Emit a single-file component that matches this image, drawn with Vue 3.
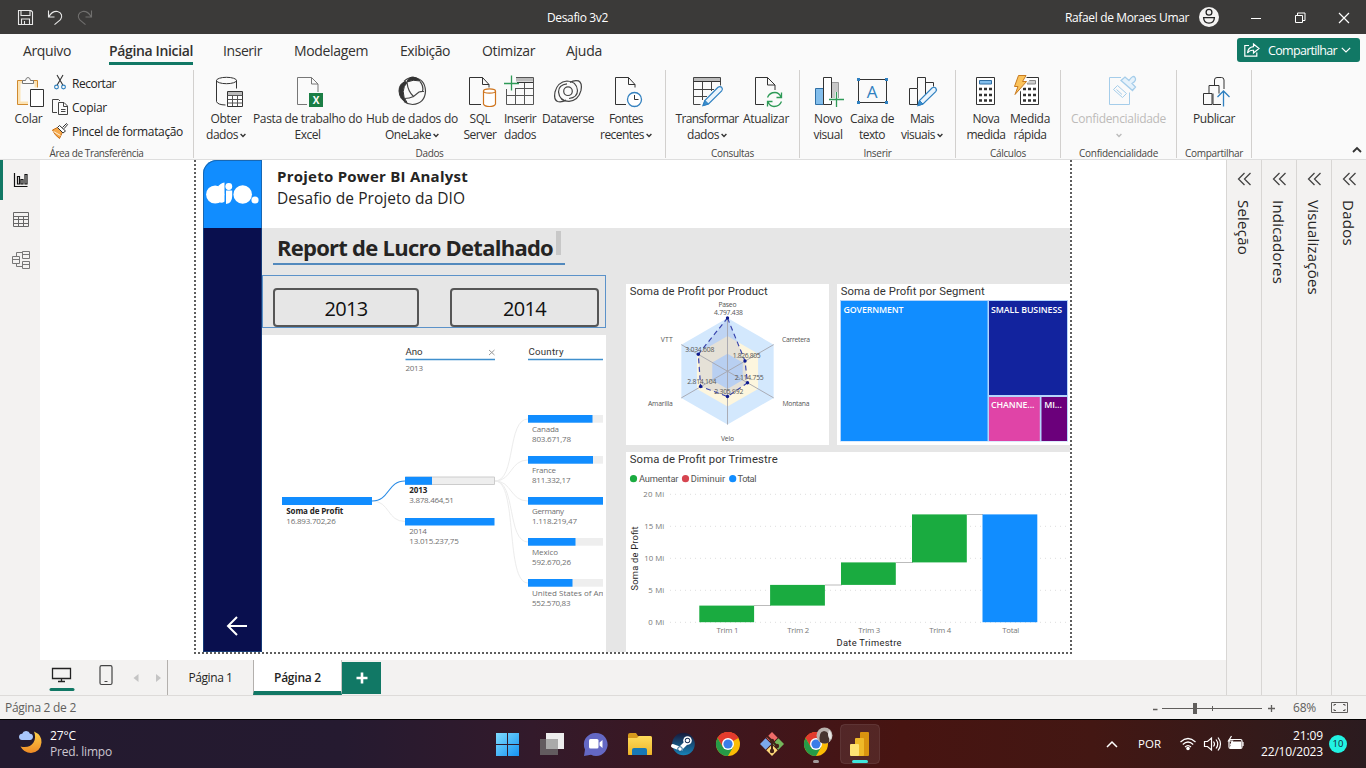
<script setup>
// Sets letter-spacing so that a label takes the given length in px.
const vFit = {
  mounted(el, { value, modifiers }) {
    const box = el.getBoundingClientRect()
    const len = modifiers.vertical ? box.height : box.width
    el.style.letterSpacing = (value - len) / el.textContent.length + 'px'
  },
}

const tabs = [
  ['Arquivo', 48, 23], ['Página Inicial', 84, 38], ['Inserir', 39, 30], ['Modelagem', 74, 32],
  ['Exibição', 50, 32], ['Otimizar', 53, 32], ['Ajuda', 36, 31],
]

const groups = [
  { w: 472, pad: 8, label: 'Dados', lw: 28, buttons: [
    { w: 48, icon: 'db', vb: '208 74 36 34', lines: [['Obter', 31], ['dados', 32, 1]] },
    { w: 115, icon: 'excel', vb: '290 74 36 34', lines: [['Pasta de trabalho do', 109], ['Excel', 26]] },
    { w: 94, icon: 'hub', vb: '394 74 36 34', lines: [['Hub de dados do', 92], ['OneLake', 46, 1]] },
    { w: 42, icon: 'sql', vb: '462 74 36 34', lines: [['SQL', 21], ['Server', 33]] },
    { w: 38, icon: 'insert', vb: '502 74 36 34', lines: [['Inserir', 32], ['dados', 32]] },
    { w: 58, icon: 'dataverse', vb: '550 74 36 34', lines: [['Dataverse', 52]] },
    { w: 58, icon: 'recent', vb: '608 74 36 34', lines: [['Fontes', 34], ['recentes', 44, 1]] },
  ] },
  { w: 134, pad: 5, label: 'Consultas', lw: 43, buttons: [
    { w: 72, icon: 'transform', vb: '689 74 36 34', lines: [['Transformar', 63], ['dados', 32, 1]] },
    { w: 46, icon: 'refresh', vb: '748 74 36 34', lines: [['Atualizar', 46]] },
  ] },
  { w: 156, pad: 9, label: 'Inserir', lw: 28, buttons: [
    { w: 38, icon: 'visual', vb: '810 74 36 34', lines: [['Novo', 28], ['visual', 29]] },
    { w: 50, icon: 'textbox', vb: '854 74 36 34', lines: [['Caixa de', 44], ['texto', 26]] },
    { w: 50, icon: 'more', vb: '904 74 36 34', lines: [['Mais', 24], ['visuais', 34, 1]] },
  ] },
  { w: 105, pad: 8, label: 'Cálculos', lw: 36, buttons: [
    { w: 44, icon: 'calc', vb: '968 74 36 34', lines: [['Nova', 27], ['medida', 39]] },
    { w: 44, icon: 'quick', vb: '1012 74 36 34', lines: [['Medida', 40], ['rápida', 33]] },
  ] },
  { w: 116, pad: 0, label: 'Confidencialidade', lw: 79, buttons: [
    { w: 115, icon: 'sens', vb: '1100 74 36 34', off: true, lines: [['Confidencialidade', 95], ['', 0, 1]] },
  ] },
  { w: 75, pad: 0, label: 'Compartilhar', lw: 58, buttons: [
    { w: 74, icon: 'publish', vb: '1196 74 36 34', lines: [['Publicar', 42]] },
  ] },
]

const panes = [['Seleção', 55], ['Indicadores', 84], ['Visualizações', 95], ['Dados', 46]]

const countries = [
  ['Canada', '803.671,78', 415, 64.5, 27, 39], ['France', '811.332,17', 456, 65, 24, 38.5],
  ['Germany', '1.118.219,47', 497, 75, 32, 45], ['Mexico', '592.670,26', 538, 47.5, 26, 39],
  ['United States of Am', '552.570,83', 579, 44.5, 74, 38.5],
]
const radarLabels = [
  ['Paseo', 727.5, 307, 18], ['4.797.438', 728.5, 315, 29], ['VTT', 666.8, 342, 12], ['Carretera', 796, 342, 28],
  ['3.034.608', 699.8, 352, 29], ['1.826.805', 746.7, 358, 28], ['2.814.104', 701.8, 384, 29],
  ['2.114.755', 749.2, 380, 29], ['2.305.992', 728.8, 394, 29], ['Amarilla', 660.4, 406, 25],
  ['Montana', 796, 406, 27], ['Velo', 727.5, 441, 13],
]
const radarPoints = [[727.5, 318], [745, 361], [747.5, 382.8], [727.5, 396.5], [700.6, 386.5], [698.3, 354.3]]
const hex = (r) => [0, 60, 120, 180, 240, 300]
  .map((a) => [727.5 + r * Math.sin((a * Math.PI) / 180), 371.3 - r * Math.cos((a * Math.PI) / 180)].join())
  .join(' ')

const ticks = [['20 Mi', 494, 21], ['15 Mi', 526, 20], ['10 Mi', 558, 20], ['5 Mi', 590, 16], ['0 Mi', 622, 16]]
const falls = [
  ['Trim 1', 699.3, 605.6, 622.2, 22], ['Trim 2', 770.1, 584.9, 605.6, 22], ['Trim 3', 841, 562.4, 584.9, 22],
  ['Trim 4', 912, 514.4, 562.4, 22], ['Total', 982.5, 514.4, 622.2, 17],
]
</script>

<template>
  <div class="app">
    <header class="titlebar">
      <svg class="quick" width="110" height="34" fill="none" stroke="#e8e8e8" stroke-width="1.1">
        <path d="M18.500 10.500h12.500l1.500 1.500v12.500h-14zM21 10.500v5h9v-5M21.500 24.500v-5.500h8v5.500M24.500 24v-3" />
        <path d="M48.500 10.500v6.500h6M49 16.500c2-3.500 5-5.500 8.500-5c4 .8 5.500 5 3 8.200l-6 5" />
        <path stroke="#706f6e" d="M91.500 10.500v6.500h-6M91 16.500c-2-3.500-5-5.500-8.500-5c-4 .8-5.500 5-3 8.200l6 5" />
      </svg>
      <span class="doc" v-fit="61">Desafio 3v2</span>
      <span class="user" v-fit="124">Rafael de Moraes Umar</span>
      <svg width="167" height="34" viewBox="1199 0 167 34" fill="none" stroke="#fff">
        <circle cx="1209" cy="17" r="10" fill="#f3f2f1" stroke="none" />
        <circle cx="1209" cy="12.300" r="2.900" stroke="#222" stroke-width="1.300" />
        <path d="M1203.600 17.600h10.800q-.2 5.600-5.400 5.600t-5.400-5.600z" stroke="#222" stroke-width="1.300" />
        <path d="M1251 18.500h10M1295.500 15.500h7v7h-7zM1297.500 15v-2h7.500v7.500h-2" />
        <path d="M1339 13l10 10M1349 13l-10 10" stroke-width="1.200" />
      </svg>
    </header>

    <section class="ribbon">
      <nav class="tabs">
        <span v-for="(t, i) in tabs" :key="t[0]" :class="['tab', { on: i === 1 }]" :style="{ marginLeft: t[2] + 'px', width: t[1] + 'px' }">
          <span v-fit="t[1]">{{ t[0] }}</span>
        </span>
        <button class="share">
          <svg width="16" height="14" fill="none" stroke="#fff" stroke-width="1.200">
            <path d="M5 2.500H.8v10.700h12V9.500" />
            <path d="M9.500 1l5.500 4.500l-5.500 4.500V7.300Q5.500 7 3.500 10Q4 4.300 9.500 3.700z" />
          </svg>
          <span v-fit="69">Compartilhar</span>
          <svg width="10" height="8" fill="none" stroke="#fff" stroke-width="1.200"><path d="M.8 1.800l4.200 4.200l4.200-4.200" /></svg>
        </button>
      </nav>

      <div class="tools">
        <div class="group first">
          <div class="buttons">
            <div class="btn paste">
              <svg width="36" height="34" viewBox="11 74 36 34" fill="none">
                <path d="M17.500 80.500h20v24h-20z" fill="#fce3b4" stroke="#d08a2e" />
                <path d="M20.500 83.500h14v18h-14z" fill="#fafafa" />
                <path d="M22.500 83.500v-3h3q.5-3 2.500-3t2.500 3h3v3z" fill="#fafafa" stroke="#777" />
                <path d="M28 87.500h18v20H28z" fill="#fafafa" />
                <path d="M30.500 89.500h13v17h-13z" fill="#fff" stroke="#333" />
              </svg>
              <span class="line"><span v-fit="28">Colar</span></span>
            </div>
            <div class="minis">
              <div class="mini">
                <svg width="17" height="18" fill="none" stroke="#333" stroke-width="1.100">
                  <path d="M5 1l5.800 10M11 1L5.200 11" /><circle cx="4.500" cy="13" r="1.900" stroke="#2e7fbd" /><circle cx="11.500" cy="13" r="1.900" stroke="#2e7fbd" />
                </svg>
                <span v-fit="44">Recortar</span>
              </div>
              <div class="mini">
                <svg width="17" height="18" fill="none" stroke="#444">
                  <path d="M5 14.500H.5v-13h6l1.500 1.500" /><path d="M6.500 4.500h5.500l3.500 3.500v8.500h-9zM11.500 4.500v4h4M9 11.500h4.500M9 13.500h4.500" />
                </svg>
                <span v-fit="35">Copiar</span>
              </div>
              <div class="mini">
                <svg width="17" height="18" fill="none">
                  <path d="M.5 8l5-2.500l5 4.500l-3 6.500Q2.500 13 .5 8z" fill="#f6a94c" stroke="#c96f16" /><path d="M1.500 9.500l7 4" stroke="#fff3dd" />
                  <path d="M5.500 5.500l2-2l6 5.500l-2.500 2z" fill="#fff" stroke="#333" /><path d="M10.500 5.500l4-4l1 1.200l-3.500 4" stroke="#333" />
                </svg>
                <span v-fit="111">Pincel de formatação</span>
              </div>
            </div>
          </div>
          <div class="caption"><span v-fit="94">Área de Transferência</span></div>
        </div>

        <div v-for="g in groups" :key="g.label" class="group" :style="{ width: g.w + 'px' }">
          <div class="buttons" :style="{ paddingLeft: g.pad + 'px' }">
            <div v-for="b in g.buttons" :key="b.icon" :class="['btn', { off: b.off }]" :style="{ width: b.w + 'px' }">
              <svg width="36" height="34" :viewBox="b.vb" fill="none" stroke="#333">
                <template v-if="b.icon === 'db'">
                  <ellipse cx="226.500" cy="80.500" rx="10" ry="3.200" />
                  <path d="M216.500 80.500v21q1 3.300 9 3.500M236.500 80.500v8" />
                  <path d="M227.500 91.500h15v15h-15z" fill="#fff" /><path d="M228 92h14v3h-14z" fill="#bbb" stroke="none" />
                  <path d="M227.500 95.500h15M227.500 99.500h15M227.500 103h15M232.500 95v11M237.500 95v11" stroke="#555" />
                </template>
                <template v-if="b.icon === 'excel'">
                  <path d="M307 104.500h-9.500v-27h14l6.500 6.500v8M311.500 77.500v6.500h6.500" stroke="#777" />
                  <path d="M309 93h14v14h-14z" fill="#1b7e45" stroke="none" />
                  <text x="316" y="104" class="xl">X</text>
                </template>
                <template v-if="b.icon === 'hub'">
                  <path d="M404 81.500q4-4.300 9-4q12 1 12.500 13.500q-.5 12.500-13 13.500q-5-.2-8.500-3" stroke="#444" stroke-width="1.200" />
                  <path d="M407 82q1.500-5 6-5q5 .5 7 4q-6.500-2-13 1z" fill="#333" />
                  <path d="M405.500 81.500q-6.500 2-6.500 9.500q.5 9 8 11.500q-4-5-3.800-11q.4-5.500 3.800-9z" fill="#333" />
                  <path d="M407 82.500q1 9 6.500 14l5.500-4.500q3-1 5-.5M404.500 98.500q5 0 9-2M420 81.500q4 4.500 2.500 10" stroke="#444" stroke-width="1.200" />
                </template>
                <template v-if="b.icon === 'sql'">
                  <path d="M481 104.500h-11.500v-27h13l6.500 7v3M482.500 77.500v7h6.500" />
                  <path d="M483.500 91v13q1 2.500 6 2.500t6-2.500v-13" fill="#fff" stroke="#cf751e" stroke-width="1.200" /><ellipse cx="489.500" cy="91" rx="6" ry="2.200" fill="#fff" stroke="#cf751e" stroke-width="1.200" />
                </template>
                <template v-if="b.icon === 'insert'">
                  <path d="M506.500 89v15.500h27v-27H516M507 95.500h26M515 88.500h18M515.500 88v16M524.500 82v22" stroke="#555" />
                  <path d="M516 78h17v3.500h-17z" fill="#bbb" stroke="none" /><path d="M517 82.500h16" />
                  <path d="M504 83.500h15M511.500 75.500v15" stroke="#2e9a57" stroke-width="1.300" />
                </template>
                <template v-if="b.icon === 'dataverse'">
                  <g stroke="#444" stroke-width="1.200">
                    <path d="M566 100q-4 2.500-8.500 1.500q-4-2-2.500-9.500q2.500-10 12-11q9.500 0 10.500 9.500q0 7-8.500 8" />
                    <path d="M566 100q-4 2.500-8.500 1.500q-4-2-2.500-9.500q2.500-10 12-11q9.500 0 10.500 9.500q0 7-8.500 8" transform="rotate(180 568 91.200)" />
                    <circle cx="568" cy="91.200" r="4.300" />
                  </g>
                </template>
                <template v-if="b.icon === 'recent'">
                  <path d="M626 104.500h-10.500v-27h13l6.500 7v3M628.500 77.500v7h6.500" />
                  <circle cx="634.500" cy="99.500" r="7" fill="#fff" stroke="#3481bf" stroke-width="1.300" /><path d="M634.500 95v4.500h4" />
                </template>
                <template v-if="b.icon === 'transform'">
                  <path d="M693.500 77.500h27v8M693.500 77.500v27h7M694 89.500h20M694 96.500h13M702.500 82v18M711.500 82v9" stroke="#444" />
                  <path d="M694 78h26v3.500h-26z" fill="#bbb" stroke="none" /><path d="M693.500 81.500h27" />
                  <path d="M703 105.500l1.800-5L718 87.300q2-1.500 3.700 0q1.500 1.800 0 3.600L708.500 104z" fill="#e9f4fd" stroke="#2f80c0" stroke-width="1.200" /><path d="M703 105.500l2-5l3.500 3.500z" fill="#3a8fd0" stroke="#2f80c0" />
                </template>
                <template v-if="b.icon === 'refresh'">
                  <path d="M764 104.500h-8.500v-27h12l7.500 7.500v5M767.500 77.500v7.500h7.500" />
                  <path d="M767.500 97.500q2-5 7.500-5q4 0 6 4.500M781.500 92.500v5h-5M781.500 101.500q-2 5-7.500 5q-4 0-6-4.500M767.500 106.500v-5h5" stroke="#2e9a57" stroke-width="1.300" />
                </template>
                <template v-if="b.icon === 'visual'">
                  <path d="M831.500 82.500h7v18h-7z" fill="#c8c8c8" stroke="#999" /><path d="M815.500 88.500h8v16h-8z" fill="#83beec" stroke="#2f6fa5" /><path d="M823.500 77.500h8v27h-8z" fill="#fff" />
                  <path d="M829 99.500h15M836.500 92v15" stroke="#fafafa" stroke-width="3" /><path d="M829 99.500h15M836.500 92v15" stroke="#2e9a57" stroke-width="1.300" />
                </template>
                <template v-if="b.icon === 'textbox'">
                  <path d="M858.500 79.500h28v23h-28z" /><path d="M857 78h3v3h-3zM885 78h3v3h-3zM857 101h3v3h-3zM885 101h3v3h-3z" fill="#2f80c0" stroke="none" />
                  <text x="872" y="97.500" class="ta">A</text>
                </template>
                <template v-if="b.icon === 'more'">
                  <path d="M909.500 104.500v-16h8v16zM917.500 88v-10.500h8v20M925.500 82.500h8v4M917 104.500h2" />
                  <path d="M918 105.500l1.500-5L932 88q2-1.500 3.700 0q1.500 1.800 0 3.600L923 104z" fill="#e9f4fd" stroke="#2f80c0" stroke-width="1.200" /><path d="M918 105.500l1.500-5l3.500 3.500z" fill="#3a8fd0" stroke="#2f80c0" />
                </template>
                <template v-if="b.icon === 'calc'">
                  <path d="M976.500 77.500h18v27h-18z" fill="#fff" /><path d="M979.500 80.500h12v3.500h-12z" fill="#83beec" stroke="#2f6fa5" />
                  <path d="M979 89h14M979 95h14M979 100.500h14" stroke-width="2.600" stroke-dasharray="3 2" />
                </template>
                <template v-if="b.icon === 'quick'">
                  <path d="M1020.500 77.500h18v27h-18z" fill="#fff" /><path d="M1027 80.500h8.500v3.500h-8.500z" fill="#ccc" stroke="#888" />
                  <path d="M1023 89h14M1023 95h14M1023 100.500h14" stroke-width="2.600" stroke-dasharray="3 2" />
                  <path d="M1018.500 75.500h7.500l-3.500 6h4l-11.500 14l3-9h-4z" fill="#fbc35b" stroke="#fafafa" stroke-width="3" /><path d="M1018.500 75.500h7.500l-3.500 6h4l-11.500 13l3-8h-3.500z" fill="#fbc35b" stroke="#c77a20" />
                </template>
                <template v-if="b.icon === 'sens'">
                  <g stroke="#a5cdea"><path d="M1120 77.500h-11.500v27h20v-12" /><path d="M1112.500 89.500l4-4l9 8l-4 4zM1115.500 89.500l5.500 5" /><path d="M1120 80.500l4-3.500l4 3.500q4-6 6-3t-3 6l3.500 3.500l-3 3.500z" fill="#e6f2fb" stroke-width="1.300" /></g>
                </template>
                <template v-if="b.icon === 'publish'">
                  <path d="M1212 104.500h-8.500v-11h8.500zM1209 93v-7.500h10v8M1214.500 85v-5q0-2.500 2.500-2.500h4.500q2.500 0 2.500 2.500v9M1213 93.500v11h8" stroke-linejoin="round" />
                  <path d="M1217.500 97l6-6l6 6M1223.500 91v15.500" stroke="#2f80c0" stroke-width="1.300" />
                </template>
              </svg>
              <span v-for="l in b.lines" :key="l[0]" class="line">
                <span v-if="l[0]" v-fit="l[1]">{{ l[0] }}</span>
                <svg v-if="l[2]" :class="['chev', { lone: !l[0] }]" width="6" height="5" fill="none" :stroke="b.off ? '#bbb' : '#333'" stroke-width="1.400"><path d="M.6 1l2.400 2.400l2.400-2.400" /></svg>
              </span>
            </div>
          </div>
          <div class="caption"><span v-fit="g.lw">{{ g.label }}</span></div>
        </div>
        <svg class="collapse" width="12" height="8" fill="none" stroke="#333" stroke-width="1.800"><path d="M2 6l4-4l4 4" /></svg>
      </div>
    </section>

    <div class="middle">
      <div class="work">
        <div class="stage">
          <aside class="rail">
            <svg width="40" height="120" viewBox="0 160 40 120" fill="none">
              <path d="M0 160h3v40H0z" fill="#117865" />
              <path d="M14.500 173v13.500h13M17.500 176.500h2v7.500h-2zM21 179.500h2v4.500h-2zM25 174.500h2v9.500h-2z" stroke="#111" stroke-width="1.200" />
              <path d="M13.500 212.500h15v14h-15zM13.500 216.500h15M13.500 219.500h15M13.500 223.500h15M18.500 216v10M23.500 216v10" stroke="#666" />
              <path d="M12.500 256.500h7v7h-7zM22.500 251.500h7v7h-7zM22.500 261.500h7v7h-7zM12.500 259.500h7M22.500 254.500h7M22.500 264.500h7M16.500 256v-3.500h6M16.500 264v2.500h6" stroke="#777" />
            </svg>
          </aside>
          <div class="report">
            <div class="brand">
              <svg width="59" height="68" viewBox="203 160 59 68" fill="#fff">
                <circle cx="215.200" cy="194.500" r="9.100" /><path d="M218 187q2-4 6.500-4.500v19q-3 2.500-6 0z" />
                <circle cx="228.800" cy="186.500" r="3.400" /><path d="M226 190.500h6.200v5.500q0 7-6.200 8z" />
                <circle cx="242.700" cy="194.500" r="9.300" /><circle cx="255" cy="200" r="3.600" />
              </svg>
              <div class="navy">
                <svg width="22" height="20" fill="none" stroke="#fff" stroke-width="2"><path d="M21 10H2M11 1L2 10l9 9" /></svg>
              </div>
            </div>
            <div class="page">
              <div class="head">
                <b v-fit="191">Projeto Power BI Analyst</b>
                <span v-fit="188">Desafio de Projeto da DIO</span>
              </div>
              <div class="body">
                <div class="left">
                  <div class="title"><b v-fit="276">Report de Lucro Detalhado</b><i></i></div>
                  <div class="slicer">
                    <button class="y1"><span v-fit="43">2013</span></button>
                    <button class="y2"><span v-fit="43">2014</span></button>
                  </div>
                  <svg class="card" width="344" height="317" viewBox="262 335 344 317">
                    <g class="din big"><text x="405.500" y="355" textLength="17">Ano</text><text x="528.500" y="355" textLength="35">Country</text></g>
                    <path d="M405.500 359.500H495M528 359.500h75" stroke="#3f8fcd" stroke-width="1.300" />
                    <path d="M489 350l5.500 5M494.500 350l-5.500 5" stroke="#999" />
                    <text x="405.500" y="371" class="seg" textLength="17.500">2013</text>
                    <g fill="none">
                      <path d="M495 481C516 481 507 419 528 419M495 481C512 481 510 460 528 460M495 481C512 481 510 501 528 501M495 481C516 481 507 542 528 542M495 481C518 481 505 583 528 583M372 501C390 501 387 521.500 405 521.500" stroke="#ececec" />
                      <path d="M372 501C390 501 387 481 405 481" stroke="#2b8ce6" stroke-width="1.200" />
                    </g>
                    <g fill="#118dff">
                      <path d="M282 497h90v8h-90zM405 518h89.500v7.500H405z" /><path d="M405.500 477h89v7.500h-89z" fill="#eee" stroke="#ccc" /><path d="M405 476.800h27v8h-27z" />
                    </g>
                    <g class="seg">
                      <text x="286.300" y="514.300" class="strong" textLength="57">Soma de Profit</text><text x="286.300" y="524.300" textLength="49.500">16.893.702,26</text>
                      <text x="409.300" y="493.200" class="strong" textLength="18">2013</text><text x="409.300" y="503.300" textLength="44.500">3.878.464,51</text>
                      <text x="409.300" y="534.300" textLength="17.500">2014</text><text x="409.300" y="544.300" textLength="49.500">13.015.237,75</text>
                    </g>
                    <svg x="528" y="335" width="75" height="317" viewBox="528 335 75 317">
                      <g v-for="c in countries" :key="c[0]" class="seg">
                        <rect x="528" :y="c[2]" width="75" height="7.700" fill="#eee" /><rect x="528" :y="c[2]" :width="c[3]" height="7.700" fill="#118dff" />
                        <text x="532" :y="c[2] + 17.300" :textLength="c[4]">{{ c[0] }}</text><text x="532" :y="c[2] + 27.300" :textLength="c[5]">{{ c[1] }}</text>
                      </g>
                    </svg>
                  </svg>
                </div>
                <div class="right">
                  <div class="pair">
                    <svg class="card" width="203" height="161" viewBox="626 284 203 161">
                      <text x="629.700" y="295.300" class="din ttl" textLength="138">Soma de Profit por Product</text>
                      <polygon :points="hex(53.300)" fill="#d3e8fd" /><polygon :points="hex(35.300)" fill="#fdf6de" /><polygon :points="hex(17.600)" fill="#cbe2fb" />
                      <polygon :points="radarPoints.join(' ')" fill="#12239e" fill-opacity=".1" stroke="#3a45ad" stroke-width="1.200" stroke-dasharray="5 3.500" />
                      <path d="M727.500 318v106.600M681.300 344.600l92.400 53.300M773.700 344.600l-92.400 53.300" stroke="#a5a5ad" stroke-width=".9" />
                      <circle v-for="p in radarPoints" :key="p[1]" :cx="p[0]" :cy="p[1]" r="1.700" fill="#0d1a8e" />
                      <text v-for="l in radarLabels" :key="l[0]" :x="l[1]" :y="l[2]" :textLength="l[3]" class="tiny">{{ l[0] }}</text>
                    </svg>
                    <svg class="card" width="233" height="161" viewBox="837 284 233 161">
                      <text x="840.700" y="295.300" class="din ttl" textLength="144">Soma de Profit por Segment</text>
                      <path d="M840 300h228v141.500H840z" fill="#b5d5fb" />
                      <path d="M841 301h146.500v140H841z" fill="#118dff" /><path d="M989 301h78v94h-78z" fill="#12239e" />
                      <path d="M989 397h50.800v44H989z" fill="#e044a7" /><path d="M1041.500 397h25.500v44h-25.500z" fill="#6b007b" />
                      <g class="tree"><text x="843.500" y="313" textLength="60">GOVERNMENT</text><text x="991" y="313" textLength="71">SMALL BUSINESS</text><text x="991" y="408" textLength="43.500">CHANNE...</text><text x="1044.300" y="408" textLength="17.500">MI...</text></g>
                    </svg>
                  </div>
                  <svg class="card" width="444" height="200" viewBox="626 452 444 200">
                    <text x="629.700" y="463.200" class="din ttl" textLength="148">Soma de Profit por Trimestre</text>
                    <circle cx="633.500" cy="478.700" r="3.600" fill="#1aab40" /><circle cx="685.500" cy="478.700" r="3.600" fill="#d64550" /><circle cx="732.700" cy="478.700" r="3.600" fill="#118dff" />
                    <g class="din leg"><text x="639" y="482" textLength="39.500">Aumentar</text><text x="690.700" y="482" textLength="34.500">Diminuir</text><text x="737.500" y="482" textLength="19">Total</text></g>
                    <g v-for="t in ticks" :key="t[0]"><path :d="`M670 ${t[1] + .3}h398`" stroke="#dedede" stroke-dasharray="1 4" /><text :x="664.300 - t[2]" :y="t[1] + 2.800" :textLength="t[2]" class="axis">{{ t[0] }}</text></g>
                    <path d="M754 605.500h17M825 585h17M896 562.500h17M967 514.500h16" stroke="#bbb" />
                    <g v-for="(f, i) in falls" :key="f[0]">
                      <rect :x="f[1]" :y="f[2]" width="54.800" :height="f[3] - f[2]" :fill="i === 4 ? '#118dff' : '#1aab40'" />
                      <text :x="f[1] + 28.200" y="633" :textLength="f[4]" class="axis mid">{{ f[0] }}</text>
                    </g>
                    <text x="869" y="646.300" class="din leg dark mid" textLength="65">Date Trimestre</text>
                    <text transform="translate(637.500 558.500) rotate(-90)" class="din leg dark mid" textLength="64">Soma de Profit</text>
                  </svg>
                </div>
              </div>
            </div>
          </div>
        </div>
        <div class="pages">
          <svg width="167" height="35" viewBox="0 660 167 35" fill="none">
            <path d="M52.500 668.500h18v10h-18zM61.500 679v2M58 681.500h7" stroke="#222" stroke-width="1.300" /><path d="M51 689.500h22" stroke="#117865" stroke-width="3" stroke-linecap="round" />
            <rect x="100" y="665.700" width="12" height="18.800" rx="1.500" stroke="#444" stroke-width="1.200" /><path d="M104.500 681.500h3" stroke="#444" />
            <path d="M138.500 674v8l-5-4zM156 674v8l5-4z" fill="#c4c4c4" />
          </svg>
          <span class="ptab"><span v-fit="44">Página 1</span></span>
          <span class="ptab on"><span v-fit="47">Página 2</span></span>
          <span class="add"><svg width="12" height="12" stroke="#fff" stroke-width="2.600"><path d="M6 .5v11M.5 6h11" /></svg></span>
        </div>
      </div>
      <div v-for="p in panes" :key="p[0]" class="pane">
        <svg width="16" height="14" fill="none" stroke="#444" stroke-width="1.300"><path d="M7.500 1l-6 6l6 6M13.500 1l-6 6l6 6" /></svg>
        <span v-fit.vertical="p[1]">{{ p[0] }}</span>
      </div>
    </div>

    <footer class="status">
      <span v-fit="71">Página 2 de 2</span>
      <svg width="130" height="24" viewBox="1150 695 130 24" stroke="#605e5c" fill="none">
        <path d="M1153 708.500h4.500M1268 707.500h7M1271.500 704v7" stroke-width="1.300" /><path d="M1162 707.500h100M1212.500 705v5" /><path d="M1193 702h4v11h-4z" fill="#605e5c" stroke="none" />
      </svg>
      <span class="pct" v-fit="23">68%</span>
      <svg class="fitpage" width="17" height="13" fill="none" stroke="#605e5c"><path d="M.5 1.500h16v10H.5z" /><path d="M3 5V3.500h2M12 3.500h2V5M3 8v1.500h2M12 9.500h2V8" /></svg>
    </footer>

    <div class="taskbar">
      <svg width="30" height="48" viewBox="16 720 30 48">
        <defs><linearGradient id="moon" x1="0" y1="0" x2="0" y2="1"><stop offset="0" stop-color="#ffd24a" /><stop offset="1" stop-color="#ee8a25" /></linearGradient></defs>
        <path d="M34 731.500q8 3.500 7.500 11q-1 9.500-10.500 10.500q-7 0-10.500-6.500q9 2 13-4q3-5 .5-11z" fill="url(#moon)" />
        <path d="M22 740q-3-.3-3-3.200q.3-2.800 3.200-3q1-3 4-2.800q3 .2 3.800 2.800q2.800 0 3 3q-.2 3-3 3.200z" fill="#a9c7fb" />
      </svg>
      <div class="weather"><span v-fit="26">27°C</span><span class="dim" v-fit="62">Pred. limpo</span></div>
      <svg class="apps" width="396" height="48" viewBox="490 720 396 48">
        <defs>
          <linearGradient id="win" x1="0" y1="0" x2="1" y2="1"><stop offset="0" stop-color="#7fdcff" /><stop offset="1" stop-color="#1593f2" /></linearGradient>
          <linearGradient id="gold" x1="0" y1="0" x2="0" y2="1"><stop offset="0" stop-color="#ffdc5c" /><stop offset="1" stop-color="#eeb52a" /></linearGradient>
          <linearGradient id="steam" x1="0" y1="0" x2="0" y2="1"><stop offset="0" stop-color="#17193a" /><stop offset="1" stop-color="#1783b8" /></linearGradient>
          <g id="chrome"><circle r="12" fill="#fbbc05" /><path d="M0 0L-10.400-6A12 12 0 0 1 10.400-6z" fill="#e33b2e" /><path d="M0-6H10.400A12 12 0 0 0-10.400-6L-5.200 3z" fill="#e33b2e" /><path d="M-10.400-6A12 12 0 0 0 0 12L5.200 3L-5.200 3z" fill="#269a48" /><circle r="6" fill="#fff" /><circle r="4.600" fill="#3a7de8" /></g>
        </defs>
        <path d="M496 733h11v11h-11zM508 733h11v11h-11zM496 745h11v11h-11zM508 745h11v11h-11z" fill="url(#win)" />
        <path d="M546 733h18v16h-18z" fill="#ededed" /><path d="M540 739h18v16h-18z" fill="#6b6769" fill-opacity=".85" /><path d="M546 739h12v10h-12z" fill="#aaa" />
        <path d="M596 733a11.500 11.500 0 1 1-5 21.800L584 756l1-6.500A11.500 11.500 0 0 1 596 733z" fill="#6468c4" /><rect x="589" y="739" width="9.500" height="9.500" rx="1.500" fill="#fff" /><path d="M599.500 742.500l3-2.500v8l-3-2.500z" fill="#fff" />
        <path d="M628 735q0-2 2-2h6l2 3h12q2 0 2 2v17h-24z" fill="#d79a1d" /><path d="M628 738h9l2-2h11q2 0 2 2v15q0 2-2 2h-20q-2 0-2-2z" fill="url(#gold)" /><path d="M632 750q0-2 2-2h11q2 0 2 2v5h-15z" fill="#1878b5" />
        <circle cx="683.500" cy="744" r="11.300" fill="url(#steam)" /><path d="M673 746l8 3M680 749l7-7" stroke="#fff" stroke-width="4" stroke-linecap="round" /><circle cx="687.500" cy="740.500" r="4.300" fill="#fff" /><circle cx="687.500" cy="740.500" r="2.700" fill="#1a3157" /><circle cx="687.500" cy="740.500" r="1.800" fill="#fff" /><circle cx="680" cy="749" r="2.300" stroke="#24618d" fill="none" />
        <use href="#chrome" x="728" y="744" />
        <g transform="translate(772 744) rotate(45)"><path d="M-8.500-8.500h8v8h-8z" fill="#ef6c69" /><path d="M.5-8.500h8v8h-8z" fill="#74b65b" /><path d="M-8.500.5h8v8h-8z" fill="#7ba9ee" /><path d="M.5.5h8v8h-8z" fill="#ffd979" /></g>
        <path d="M767 736l5 5v12M772 741l5 5" stroke="#432018" stroke-width="2" fill="none" /><circle cx="772" cy="741" r="2.200" fill="#432018" /><circle cx="777" cy="746" r="2.200" fill="#432018" /><circle cx="772" cy="751" r="2.200" fill="#432018" />
        <use href="#chrome" x="816" y="744" /><circle cx="824.500" cy="735.500" r="8" fill="#b9b2ad" /><path d="M820 742q-2-10 4-11q6 0 5 11q-4 3-9 0z" fill="#47352f" /><path d="M829 730q4 4 2 9q-3 0-3-5z" fill="#e8e6e4" />
        <rect x="813" y="760" width="6" height="3" rx="1.500" fill="#a39a9b" />
        <rect x="840.500" y="724.500" width="39" height="39" rx="4" fill="#fff" fill-opacity=".08" stroke="#fff" stroke-opacity=".1" />
        <rect x="860" y="732" width="9" height="24" rx="1" fill="#d9930f" /><rect x="855" y="738" width="9" height="18" rx="1" fill="#efb928" /><rect x="850" y="744" width="9" height="12" rx="1" fill="#ffe273" />
        <rect x="852" y="760" width="16" height="3" rx="1.500" fill="#3ee6dc" />
      </svg>
      <svg class="tray1" width="16" height="48" fill="none" stroke="#fff" stroke-width="1.500"><path d="M3 27l5-5l5 5" /></svg>
      <span class="por" v-fit="23">POR</span>
      <svg class="tray2" width="70" height="48" viewBox="1178 720 70 48" fill="none" stroke="#fff" stroke-width="1.200">
        <path d="M1180.500 742q7.500-7 15 0M1182.800 744.500q5.200-5 10.400 0M1185 747q3-2.800 6 0" /><circle cx="1188" cy="748.500" r="1.200" fill="#fff" />
        <path d="M1204.500 741.500h3l4-3.500v12l-4-3.500h-3zM1213.500 741.500q2 2.500 0 5M1216 739.500q3.500 4.500 0 9M1218 737.500q5 6.500 0 13" />
        <rect x="1229" y="739.500" width="13" height="9" rx="1.500" /><path d="M1232 742h8.500v5.500H1230.500zM1243 742v4" fill="#fff" /><path d="M1231.500 736l-3 5h4l-2 4" stroke="#fff" />
      </svg>
      <div class="clock"><span v-fit="30">21:09</span><span v-fit="62">22/10/2023</span></div>
      <span class="badge">10</span>
    </div>
  </div>
</template>

<style>
html, body { margin: 0; overflow: hidden; }
</style>

<style scoped>
.app { width: 1366px; height: 768px; overflow: hidden; display: flex; flex-direction: column; font: 12px/16px "Open Sans", "Noto Sans", sans-serif; color: #252423; background: #fff; }
.app svg { display: block; flex: none; }
.app button { margin: 0; padding: 0; font: inherit; background: none; border: 0; box-sizing: border-box; }
span, b { white-space: nowrap; }
.titlebar { height: 34px; flex: none; background: #3b3a39; color: #fff; display: flex; align-items: center; font-size: 12px; }
.titlebar > span { flex: none; padding-top: 1px; }
.doc { margin-left: 437px; }
.user { margin: 0 10px 0 auto; }
.ribbon { height: 126px; flex: none; box-sizing: border-box; background: #fafafa; border-bottom: 1px solid #dedede; display: flex; flex-direction: column; }
.tabs { height: 31px; flex: none; display: flex; font-size: 14px; color: #323130; }
.tab { flex: none; height: 28px; line-height: 33px; }
.tab.on { border-bottom: 3px solid #117865; font-weight: 600; }
.app .share { margin: 4px 6px 0 auto; width: 123px; height: 24px; background: #117865; border-radius: 3px; color: #fff; display: flex; align-items: center; padding: 0 0 0 7px; font-size: 12.500px; }
.share span { margin: 1px 4px 0 8px; }
.tools { flex: 1; padding-top: 5px; display: flex; }
.group { flex: none; height: 88px; border-right: 1px solid #d2d0ce; box-sizing: border-box; display: flex; flex-direction: column; font-size: 12px; }
.first { width: 194px; }
.buttons { height: 76px; flex: none; display: flex; }
.first .buttons { padding-left: 8px; }
.btn { flex: none; display: flex; flex-direction: column; align-items: center; padding-top: 4px; box-sizing: border-box; color: #323130; }
.paste { width: 41px; }
.btn.off { color: #bdbbb9; }
.btn > svg { margin-bottom: 2px; }
.line { display: flex; align-items: center; justify-content: center; height: 16px; line-height: 17px; }
.chev { margin: 2px 0 0 2px; }
.chev.lone { margin-left: 0; }
.minis { padding: 4px 0 0 3px; display: flex; flex-direction: column; gap: 6px; }
.mini { display: flex; gap: 3px; height: 18px; line-height: 19px; }
.caption { text-align: center; font-size: 10px; line-height: 14px; height: 14px; color: #484644; }
.collapse { margin: 76px 0 0 99px; }
.middle { height: 535px; flex: none; display: flex; background: #f3f2f1; }
.work { width: 1226px; flex: none; }
.stage { height: 500px; display: flex; background: #fff; }
.rail { width: 40px; background: #f3f2f1; }
.report { width: 878px; height: 494px; margin-left: 154px; box-sizing: border-box; padding: 0 2px 2px 9px; display: flex;
  background: repeating-linear-gradient(#5e5e5e 0 2px, #fff 2px 4px) 0 0 / 2px 100% no-repeat, repeating-linear-gradient(#5e5e5e 0 2px, #fff 2px 4px) 100% 0 / 2px 100% no-repeat, repeating-linear-gradient(90deg, #5e5e5e 0 2px, #fff 2px 4px) 0 100% / 100% 2px no-repeat; }
.brand { width: 59px; height: 492px; border-radius: 14px 0 0 0; overflow: hidden; background: #118dff; box-shadow: inset 0 0 0 1px #1768b5; display: flex; flex-direction: column; }
.navy { flex: 1; box-sizing: border-box; border: 1px solid #153a77; border-top: 0; background: #090f4e; padding: 388px 0 0 22px; }
.page { width: 808px; }
.head { height: 68px; padding-left: 15px; box-sizing: border-box; display: flex; flex-direction: column; align-items: flex-start; font-size: 15.500px; line-height: 22px; padding-top: 5px; }
.head b { font-weight: 700; font-size: 15px; }
.body { height: 424px; background: #e6e6e6; display: flex; gap: 20px; }
.left { width: 344px; }
.title { height: 37px; width: 292px; margin: 0 0 10px 11px; box-sizing: border-box; border-bottom: 2px solid #5289bd; display: flex; padding: 3px 0 0 4px; }
.title b { font-size: 22px; line-height: 33px; font-weight: 700; }
.title i { width: 5px; height: 24px; margin-left: 3px; background: #c8c8c8; }
.slicer { height: 53px; margin-bottom: 7px; border: 1px solid #5b92c9; box-sizing: border-box; display: flex; padding: 12px 0 0 10px; gap: 31px; }
.app .slicer button { height: 39px; border: 2px solid #565656; border-radius: 4px; font-size: 20px; line-height: 38px; color: #111; }
.y1 { width: 146px; }
.y2 { width: 149px; }
.card { background: #fff; }
.right { width: 444px; padding-top: 56px; display: flex; flex-direction: column; gap: 7px; }
.pair { display: flex; gap: 8px; }
.seg { font-size: 8px; fill: #707070; }
.seg .strong { font-weight: 700; fill: #252423; }
.din { font-family: Roboto, sans-serif; fill: #333; }
.ttl { font-size: 11.300px; }
.big { font-size: 9.700px; }
.leg { font-size: 9.300px; fill: #555; }
.dark { fill: #252423; }
.mid { text-anchor: middle; }
.axis { font-size: 7.800px; fill: #777; }
.tiny { font-size: 6.800px; fill: #555; text-anchor: middle; }
.tree { font-size: 8.800px; font-weight: 600; fill: #fff; }
.xl { font: bold 10px "Open Sans", sans-serif; fill: #fff; stroke: none; text-anchor: middle; }
.ta { font: 17px "Open Sans", sans-serif; fill: #2f80c0; stroke: none; text-anchor: middle; }
.pages { height: 35px; display: flex; background: #f3f2f1; }
.ptab { width: 86px; border-left: 1px solid #b3b0ad; text-align: center; line-height: 35px; font-size: 12px; box-sizing: border-box; }
.ptab.on { width: 89px; background: #fff; border-bottom: 4px solid #117865; border-right: 1px solid #c8c6c4; font-weight: 600; }
.add { width: 39px; height: 32px; margin-top: 2px; background: #117865; display: flex; align-items: center; justify-content: center; }
.pane { width: 35px; box-sizing: border-box; border-left: 1px solid #d8d6d4; display: flex; flex-direction: column; align-items: center; padding-top: 12px; font-size: 15px; font-weight: 500; line-height: 20px; }
.pane svg { margin: 0 0 14px 2px; }
.pane span { writing-mode: vertical-rl; margin-right: 1px; }
.status { height: 24px; flex: none; box-sizing: border-box; background: #f3f2f1; border-top: 1px solid #dddbd9; display: flex; align-items: center; padding-left: 5px; color: #605e5c; }
.status > span { font-size: 12px; }
.status > svg:first-of-type { margin-left: auto; }
.pct { margin: 0 15px 0 13px; }
.fitpage { margin-right: 18px; }
.taskbar { height: 49px; flex: none; box-sizing: border-box; border-top: 1px solid #000; background: linear-gradient(90deg, #231a2f 0, #251a30 25%, #331a2b 39%, #40161c 55%, #471411 66%, #431713 80%, #341a1a 92%, #2b1b1f 100%); color: #fff; display: flex; align-items: flex-start; padding-left: 16px; font-size: 12px; }
.taskbar > span, .taskbar > div { flex: none; }
.weather { padding: 8px 0 0 4px; width: 70px; display: flex; flex-direction: column; align-items: flex-start; }
.dim { color: #ccc6cf; }
.apps { margin-left: 370px; }
.tray1 { margin-left: 218px; }
.por { margin: 16px 0 0 18px; font-size: 11.500px; }
.tray2 { margin-left: 17px; }
.clock { width: 75px; padding-top: 8px; display: flex; flex-direction: column; align-items: flex-end; }
.badge { width: 18px; height: 18px; border-radius: 9px; background: #22f2e2; color: #123; font-size: 9.500px; line-height: 18px; text-align: center; margin: 15px 0 0 6px; }
</style>
